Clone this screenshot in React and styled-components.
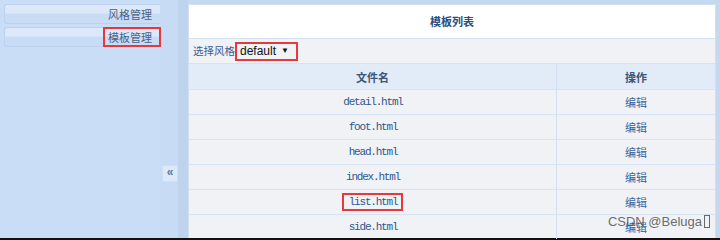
import React from 'react';
import styled, { createGlobalStyle } from 'styled-components';

const GlobalStyle = createGlobalStyle`
    html, body {
        margin: 0;
        padding: 0;
        background: #c9ddf7;
        font-family: "Noto Sans CJK SC", "Liberation Sans", sans-serif;
    }
`;

const files = ['detail.html', 'foot.html', 'head.html', 'index.html', 'list.html', 'side.html'];

const App = () => {
    return (
        <Page>
            <GlobalStyle />
            <Layout>
                <Sidebar>
                    <MenuItem>风格管理</MenuItem>
                    <MenuItem marked>模板管理</MenuItem>
                </Sidebar>
                <Gutter>
                    <Collapse>«</Collapse>
                </Gutter>
                <Main>
                    <Panel>
                        <Title>模板列表</Title>
                        <Filter>
                            选择风格
                            <Select>default <Arrow>▼</Arrow></Select>
                        </Filter>
                        <Table>
                            <thead>
                                <tr>
                                    <Th>文件名</Th>
                                    <Th narrow>操作</Th>
                                </tr>
                            </thead>
                            <tbody>
                                {files.map((f) => (
                                    <tr key={f}>
                                        <FileCell>
                                            <FileName marked={f === 'list.html'}>{f}</FileName>
                                        </FileCell>
                                        <ActionCell>编辑</ActionCell>
                                    </tr>
                                ))}
                            </tbody>
                        </Table>
                    </Panel>
                    <Watermark>CSDN @Beluga<Missing /></Watermark>
                </Main>
            </Layout>
            <BottomBar />
        </Page>
    );
};

const Page = styled.div`
    width: 720px;
    height: 240px;
    display: flex;
    flex-direction: column;
    overflow: hidden;
`;

const Layout = styled.div`
    flex: 1;
    display: flex;
    min-height: 0;
`;

const Sidebar = styled.div`
    width: 160px;
    background: #c9ddf7;
    padding: 4px 0 0 4px;
    box-sizing: border-box;
    display: flex;
    flex-direction: column;
    gap: 3px;
`;

const MenuItem = styled.div`
    position: relative;
    height: 18px;
    border: 1px solid #bcd2ef;
    border-right: none;
    border-radius: 3px 0 0 3px;
    background: linear-gradient(#dde9fb 0%, #dbe8fa 45%, #c8dcf6 50%, #c8dcf6 100%);
    font-size: 11px;
    line-height: 18px;
    color: #4a6282;
    text-align: right;
    padding-right: 8px;
    &::after {
        content: '';
        display: ${(p) => (p.marked ? 'block' : 'none')};
        position: absolute;
        right: -1px;
        top: -1px;
        width: 54px;
        height: 16px;
        border: 2px solid #e5393d;
    }
`;

const Gutter = styled.div`
    width: 18px;
    background: #c7dbf5;
    border-right: 10px solid #bed3ec;
    padding-top: 165px;
    display: flex;
    justify-content: center;
`;

const Collapse = styled.div`
    width: 14px;
    height: 15px;
    margin-left: 2px;
    background: #dde9f8;
    border: 1px solid #cfdff2;
    border-radius: 2px;
    color: #5a7aa3;
    font-size: 12px;
    font-weight: bold;
    line-height: 13px;
    text-align: center;
    font-family: "Liberation Sans", sans-serif;
`;

const Main = styled.div`
    position: relative;
    flex: 1;
    background: #c4d8ef;
    padding: 4px 4px 0 0;
`;

const Panel = styled.div`
    background: #f0f2f5;
    border: 1px solid #d2e0f1;
    border-bottom: none;
    height: 100%;
    box-sizing: border-box;
`;

const Title = styled.div`
    height: 33px;
    background: #ffffff;
    border-bottom: 1px solid #d3e1f2;
    font-size: 11px;
    font-weight: bold;
    color: #2d4f7e;
    text-align: center;
    line-height: 33px;
`;

const Filter = styled.div`
    height: 24px;
    display: flex;
    align-items: center;
    padding-left: 4px;
    font-size: 10.5px;
    line-height: 16px;
    color: #3a5d8f;
`;

const Select = styled.span`
    display: inline-flex;
    align-items: center;
    height: 15px;
    border: 2px solid #e5393d;
    padding: 0 7px 0 3px;
    font-family: "Liberation Sans", sans-serif;
    font-size: 12px;
    color: #111;
`;

const Arrow = styled.span`
    font-size: 8px;
    margin-left: 5px;
`;

const Table = styled.table`
    width: 100%;
    border-collapse: collapse;
    table-layout: fixed;
`;

const Th = styled.th`
    width: ${(p) => (p.narrow ? '158px' : 'auto')};
    height: 25px;
    background: #e2ebf8;
    border-top: 1px solid #d5e2f3;
    border-left: ${(p) => (p.narrow ? '1px solid #d2e0f2' : 'none')};
    font-size: 11px;
    line-height: 16px;
    font-weight: bold;
    color: #3b5677;
    padding: 0;
`;

const FileCell = styled.td`
    height: 24px;
    border-top: 1px solid #d5e3f4;
    text-align: center;
    vertical-align: middle;
    padding: 0;
    line-height: 16px;
    font-size: 12px;
`;

const FileName = styled.span`
    display: inline-block;
    vertical-align: middle;
    font-family: "Liberation Mono", monospace;
    font-size: 11px;
    letter-spacing: -1.2px;
    color: #2f5890;
    line-height: 12px;
    padding: 1px 4px 1px 5px;
    border: 2px solid ${(p) => (p.marked ? '#e5393d' : 'transparent')};
`;

const ActionCell = styled.td`
    height: 24px;
    border-top: 1px solid #d5e3f4;
    border-left: 1px solid #d2e0f2;
    text-align: center;
    vertical-align: middle;
    padding: 0;
    font-size: 11px;
    line-height: 16px;
    color: #3a669f;
`;

const Watermark = styled.div`
    position: absolute;
    right: 10px;
    bottom: 9px;
    display: flex;
    align-items: center;
    font-family: "Liberation Sans", sans-serif;
    font-size: 13px;
    color: rgba(70, 70, 70, 0.8);
`;

const Missing = styled.span`
    display: inline-block;
    width: 4px;
    height: 11px;
    border: 1px solid rgba(70, 70, 70, 0.8);
    margin-left: 2px;
`;

const BottomBar = styled.div`
    height: 2px;
    background: #111;
`;

export default App;
